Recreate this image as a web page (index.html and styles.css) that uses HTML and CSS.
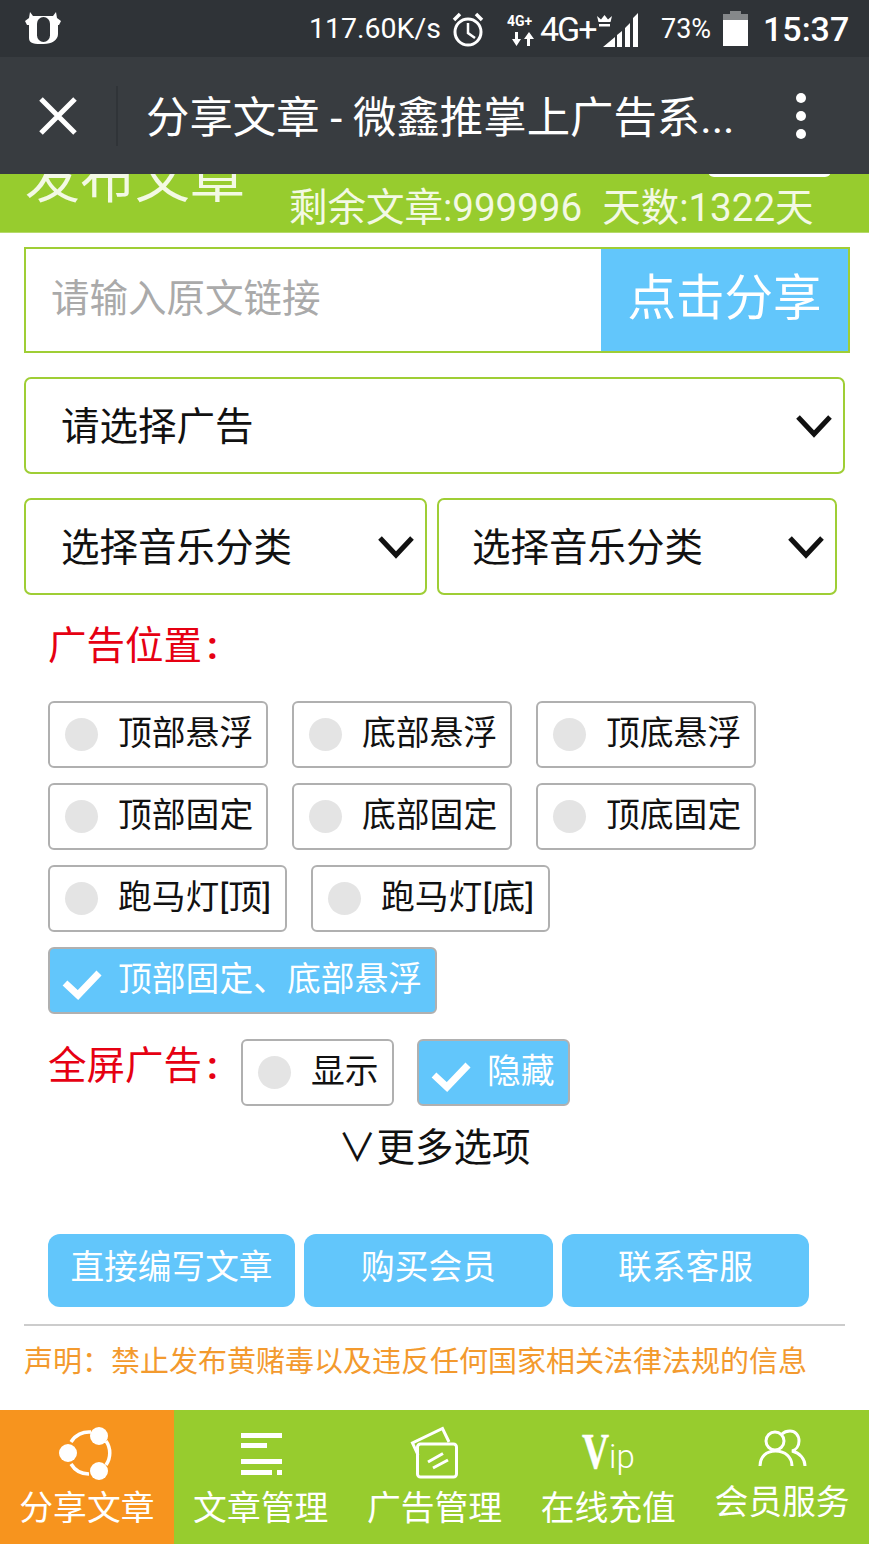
FILE: index.html
```html
<!DOCTYPE html>
<html lang="zh-CN">
<head>
  <meta charset="UTF-8">
  <title>分享文章</title>
  <link rel="stylesheet" href="styles.css">
</head>
<body>
  <div class="page">
    <div class="status-bar">
      <svg class="bull" width="36" height="36" viewBox="0 0 36 36"><path d="M5 0l3 4h20l3-4 1 6 4 3-2 4h-1v9c0 6-6 10-14.500 10S4 32 4 26v-13H2L0 9l4-3z" fill="#fff"/><rect x="12" y="5" width="13" height="25" rx="6.500" fill="#2f3337"/></svg>
      <span class="speed">117.60K/s</span>
      <svg class="clock" width="36" height="36" viewBox="0 0 36 36" fill="none" stroke="#fff"><circle cx="17" cy="20" r="13" stroke-width="3"/><path d="M17 11v10l7 5" stroke-width="2.500"/><path d="M3 8l6-6M31 8l-6-6" stroke-width="3.500"/></svg>
      <span class="net-small">4G+<svg width="22" height="14" viewBox="0 0 22 14" fill="#fff"><path d="M3 0h3v7h3l-4.500 7L0 7h3zM15 14h3V7h4l-5-7-5 7h3z"/></svg></span>
      <span class="net">4G+</span>
      <svg class="signal" width="44" height="36" viewBox="0 0 44 36" fill="#fff"><path d="M1 3l4 3.500L8.500 2 12 6.500 16 3l-1.500 6h-12zM3 11h11v2.500H3zM7 34l12-10v10zM21 22l5-4v16h-5zM29 15l5-5v24h-5zM37 5l5-5v34h-5z"/></svg>
      <span class="battery-text">73%</span>
      <div class="battery"><div class="battery-cap"></div><div class="battery-empty"></div><div class="battery-full"></div></div>
      <span class="time">15:37</span>
    </div>

    <div class="title-bar">
      <svg class="close" width="38" height="38" viewBox="0 0 38 38" stroke="#fff" stroke-width="5"><path d="M2 2l34 34M36 2L2 36"/></svg>
      <div class="title-sep"></div>
      <div class="title-text">分享文章 - 微鑫推掌上广告系...</div>
      <div class="dots"><i></i><i></i><i></i></div>
    </div>

    <div class="header">
      <div class="header-title">发布文章</div>
      <div class="header-btn"></div>
      <div class="header-stats"><span>剩余文章:999996</span><span>天数:1322天</span></div>
    </div>

    <div class="main">
      <div class="share-box">
        <div class="share-input">请输入原文链接</div>
        <div class="share-btn">点击分享</div>
      </div>

      <div class="select select-full">
        <span class="select-text">请选择广告</span>
        <svg width="36" height="24" viewBox="0 0 36 24" fill="none" stroke="#111" stroke-width="5"><path d="M2 3l16 17L34 3"/></svg>
      </div>

      <div class="select-row">
        <div class="select select-a">
          <span class="select-text">选择音乐分类</span>
          <svg width="36" height="24" viewBox="0 0 36 24" fill="none" stroke="#111" stroke-width="5"><path d="M2 3l16 17L34 3"/></svg>
        </div>
        <div class="select select-b">
          <span class="select-text">选择音乐分类</span>
          <svg width="36" height="24" viewBox="0 0 36 24" fill="none" stroke="#111" stroke-width="5"><path d="M2 3l16 17L34 3"/></svg>
        </div>
      </div>

      <div class="red-label pos-label">广告位置<span class="colon">:</span></div>

      <div class="opts">
        <div class="opt-row">
          <div class="opt w220"><i class="dot"></i><span class="opt-text">顶部悬浮</span></div>
          <div class="opt w220"><i class="dot"></i><span class="opt-text">底部悬浮</span></div>
          <div class="opt w220"><i class="dot"></i><span class="opt-text">顶底悬浮</span></div>
        </div>
        <div class="opt-row">
          <div class="opt w220"><i class="dot"></i><span class="opt-text">顶部固定</span></div>
          <div class="opt w220"><i class="dot"></i><span class="opt-text">底部固定</span></div>
          <div class="opt w220"><i class="dot"></i><span class="opt-text">顶底固定</span></div>
        </div>
        <div class="opt-row">
          <div class="opt w239"><i class="dot"></i><span class="opt-text">跑马灯[顶]</span></div>
          <div class="opt w239"><i class="dot"></i><span class="opt-text">跑马灯[底]</span></div>
        </div>
        <div class="opt-row">
          <div class="opt on w389">
            <svg class="tick" width="40" height="32" viewBox="0 0 40 32" fill="none" stroke="#fff" stroke-width="7"><path d="M3 15l13 12L37 5"/></svg><span class="opt-text">顶部固定、底部悬浮</span>
          </div>
        </div>
      </div>

      <div class="screen-row">
        <div class="red-label">全屏广告<span class="colon">:</span></div>
        <div class="opt w153"><i class="dot"></i><span class="opt-text">显示</span></div>
        <div class="opt on w153">
          <svg class="tick" width="40" height="32" viewBox="0 0 40 32" fill="none" stroke="#fff" stroke-width="7"><path d="M3 15l13 12L37 5"/></svg><span class="opt-text">隐藏</span>
        </div>
      </div>

      <div class="more">∨更多选项</div>

      <div class="actions">
        <div class="action a1">直接编写文章</div>
        <div class="action a2">购买会员</div>
        <div class="action a3">联系客服</div>
      </div>

      <div class="rule"></div>
      <div class="notice">声明&#65306;禁止发布黄赌毒以及违反任何国家相关法律法规的信息</div>
    </div>

    <div class="nav">
      <div class="nav-item active">
        <svg width="56" height="56" viewBox="0 0 56 56" fill="none"><path d="M12 17A21 21 0 0 1 32 7M47 16a21 21 0 0 1 0 24M12 39a21 21 0 0 0 18 10" stroke="#fff" stroke-width="3.500"/><circle cx="40" cy="11" r="9" fill="#fff"/><circle cx="9" cy="28" r="9" fill="#fff"/><circle cx="40" cy="46" r="9" fill="#fff"/></svg>
        <span>分享文章</span>
      </div>
      <div class="nav-item">
        <svg width="56" height="56" viewBox="0 0 56 56" fill="#fff"><path d="M8 8h41v5H8zM8 18h26v5H8zM8 34h41v5H8zM8 45h31v5H8zM44 45h5v5h-5z"/></svg>
        <span>文章管理</span>
      </div>
      <div class="nav-item">
        <svg width="56" height="56" viewBox="0 0 56 56" fill="none" stroke="#fff" stroke-width="3"><path d="M12 30L6.500 18 36.500 3.500 43 17"/><rect x="11.500" y="19" width="39" height="33" rx="3"/><path d="M22 37l15-8.500M27 43l15-8"/></svg>
        <span>广告管理</span>
      </div>
      <div class="nav-item">
        <div class="vip"><b>V</b>ip</div>
        <span>在线充值</span>
      </div>
      <div class="nav-item nav-last">
        <svg width="56" height="48" viewBox="0 0 56 48" fill="none" stroke="#fff" stroke-width="3"><circle cx="21" cy="14" r="9"/><path d="M6 39c0-9 6-15 15.500-15S38 30 38 39"/><path d="M28 7c2-2 5-3 8-3 5 0 9 4 9 10 0 5-3 9-7 10 8 2 13 8 13 15"/></svg>
        <span>会员服务</span>
      </div>
    </div>
  </div>
</body>
</html>
```

FILE: styles.css
```css
* {
  box-sizing: border-box;
}
body {
  margin: 0;
  background: #fff;
  font-family: Roboto, "Noto Sans CJK SC", sans-serif;
  color: #111;
}
.page {
  width: 869px;
  height: 1544px;
  display: flex;
  flex-direction: column;
  overflow: hidden;
}

/* phone status bar */
.status-bar {
  height: 57px;
  flex: none;
  background: #2f3337;
  color: #fff;
  display: flex;
  align-items: center;
}
.bull {
  margin-left: 25px;
  margin-top: 2px;
}
.speed {
  margin-left: 248px;
  font-size: 28.500px;
  width: 137px;
}
.clock {
  margin-left: 5px;
  margin-top: 2px;
}
.net-small {
  width: 32px;
  margin-left: 20px;
  font-size: 14px;
  font-weight: 700;
  line-height: 21px;
  display: flex;
  flex-direction: column;
}
.net-small svg {
  margin-left: 5px;
}
.net {
  margin-left: 1px;
  width: 56px;
  font-size: 34px;
  letter-spacing: -2px;
}
.signal {
  margin-top: 4px;
}
.battery-text {
  margin-left: 21px;
  width: 62px;
  font-size: 27px;
}
.battery {
  width: 25px;
  display: flex;
  flex-direction: column;
  align-items: center;
}
.battery-cap {
  width: 11px;
  height: 3px;
  background: #85888a;
}
.battery-empty {
  width: 25px;
  height: 6px;
  background: #85888a;
}
.battery-full {
  width: 25px;
  height: 26px;
  background: #fff;
}
.time {
  margin-left: 15px;
  font-size: 34px;
  font-weight: 500;
}

/* webview title */
.title-bar {
  height: 117px;
  flex: none;
  background: #383c40;
  color: #fff;
  display: flex;
  align-items: center;
}
.close {
  margin-left: 39px;
}
.title-sep {
  width: 2px;
  height: 60px;
  margin-left: 39px;
  background: #303438;
}
.title-text {
  margin-left: 28px;
  padding-bottom: 4px;
  width: 621px;
  font-size: 43.400px;
  white-space: nowrap;
}
.dots {
  margin-left: 29px;
  display: flex;
  flex-direction: column;
  gap: 8px;
}
.dots i {
  display: block;
  width: 10px;
  height: 10px;
  border-radius: 50%;
  background: #fff;
}

/* green page header, scrolled under the title bar */
.header {
  height: 59px;
  flex: none;
  position: relative;
  overflow: hidden;
  background: #97cc2e;
  color: #fff;
  display: flex;
  border-bottom: 1px solid #b6da6a;
}
.header-title {
  margin: -36px 0 0 25px;
  width: 264px;
  font-size: 55px;
  line-height: 80px;
  height: 80px;
  color: #f3f9e4;
}
.header-btn {
  position: absolute;
  left: 708px;
  top: -30px;
  width: 123px;
  height: 33px;
  background: #fff;
  border-radius: 6px;
}
.header-stats {
  display: flex;
  gap: 20px;
  font-size: 38.500px;
  line-height: 68px;
  color: #f3f9e4;
  white-space: nowrap;
}

.main {
  flex: 1;
  padding: 14px 0 0 24px;
}

.share-box {
  width: 826px;
  height: 106px;
  border: 2px solid #9fce35;
  display: flex;
}
.share-input {
  flex: 1;
  padding-left: 25px;
  font-size: 38.500px;
  line-height: 100px;
  color: #aaa;
}
.share-btn {
  width: 247px;
  background: #62c6fb;
  color: #fff;
  font-size: 48.500px;
  line-height: 100px;
  text-align: center;
}

.select {
  height: 97px;
  border: 2px solid #9fce35;
  border-radius: 7px;
  display: flex;
  align-items: center;
  justify-content: space-between;
  font-size: 38.500px;
  padding: 0 11px 0 35px;
}
.select-text {
  margin-bottom: 6px;
}
.select-full {
  width: 821px;
  margin-top: 24px;
}
.select-row {
  display: flex;
  gap: 10px;
  margin-top: 24px;
}
.select-a {
  width: 403px;
}
.select-b {
  width: 400px;
  padding-left: 33px;
}

.red-label {
  color: #e60012;
  font-size: 38.500px;
  padding-left: 24px;
  white-space: nowrap;
}
.colon {
  margin-left: 5px;
  font-weight: 700;
}
.pos-label {
  margin-top: 25px;
  line-height: 52px;
}

.opts {
  margin: 29px 0 0 24px;
  display: flex;
  flex-direction: column;
  gap: 15px;
}
.opt-row {
  display: flex;
  gap: 24px;
}
.opt {
  height: 67px;
  border: 2px solid #b0b0b0;
  border-radius: 6px;
  display: flex;
  align-items: center;
  font-size: 33.800px;
  padding-left: 15px;
  white-space: nowrap;
}
.opt-text {
  margin-bottom: 8px;
}
.w220 {
  width: 220px;
}
.w239 {
  width: 239px;
}
.w389 {
  width: 389px;
}
.w153 {
  width: 153px;
}
.opt.on {
  background: #62c6fb;
  color: #fff;
  padding-left: 12px;
}
.dot {
  flex: none;
  width: 33px;
  height: 33px;
  margin-right: 20px;
  border-radius: 50%;
  background: #e4e4e4;
}
.tick {
  flex: none;
  margin-right: 16px;
  margin-top: 6px;
}

.screen-row {
  display: flex;
  align-items: flex-start;
  margin-top: 25px;
}
.screen-row .red-label {
  line-height: 54px;
  width: 217px;
}
.screen-row .opt + .opt {
  margin-left: 23px;
}

.more {
  margin-top: 17px;
  padding-left: 314px;
  font-size: 38.500px;
  line-height: 50px;
}

.actions {
  display: flex;
  margin: 61px 0 0 24px;
  gap: 9px;
}
.action {
  height: 73px;
  background: #62c6fb;
  color: #fff;
  border-radius: 12px;
  font-size: 33.700px;
  line-height: 68px;
  text-align: center;
}
.a1 {
  width: 247px;
}
.a2 {
  width: 249px;
}
.a3 {
  width: 247px;
}

.rule {
  width: 821px;
  height: 2px;
  margin-top: 17px;
  background: #ccc;
}
.notice {
  margin-top: 16px;
  font-size: 29px;
  line-height: 40px;
  color: #f39a2e;
  white-space: nowrap;
}

/* bottom tabs */
.nav {
  height: 134px;
  flex: none;
  background: #97cc2e;
  color: #fff;
  display: flex;
}
.nav-item {
  flex: 1;
  display: flex;
  flex-direction: column;
  align-items: center;
  padding-top: 15px;
  font-size: 33.800px;
  line-height: 50px;
  white-space: nowrap;
}
.nav-item svg {
  display: block;
}
.nav-item span {
  margin-top: 3px;
}
.nav-item.active {
  background: #f7941e;
}
.nav-last svg {
  margin-top: 2px;
}
.vip {
  height: 56px;
  font-size: 33px;
  line-height: 52px;
  font-weight: 300;
}
.vip b {
  display: inline-block;
  font-family: "Liberation Serif", serif;
  font-size: 50px;
  font-weight: 700;
  -webkit-text-stroke: 0.5px #fff;
  transform: scaleX(0.75);
  transform-origin: left;
  margin-right: -9px;
}
```
